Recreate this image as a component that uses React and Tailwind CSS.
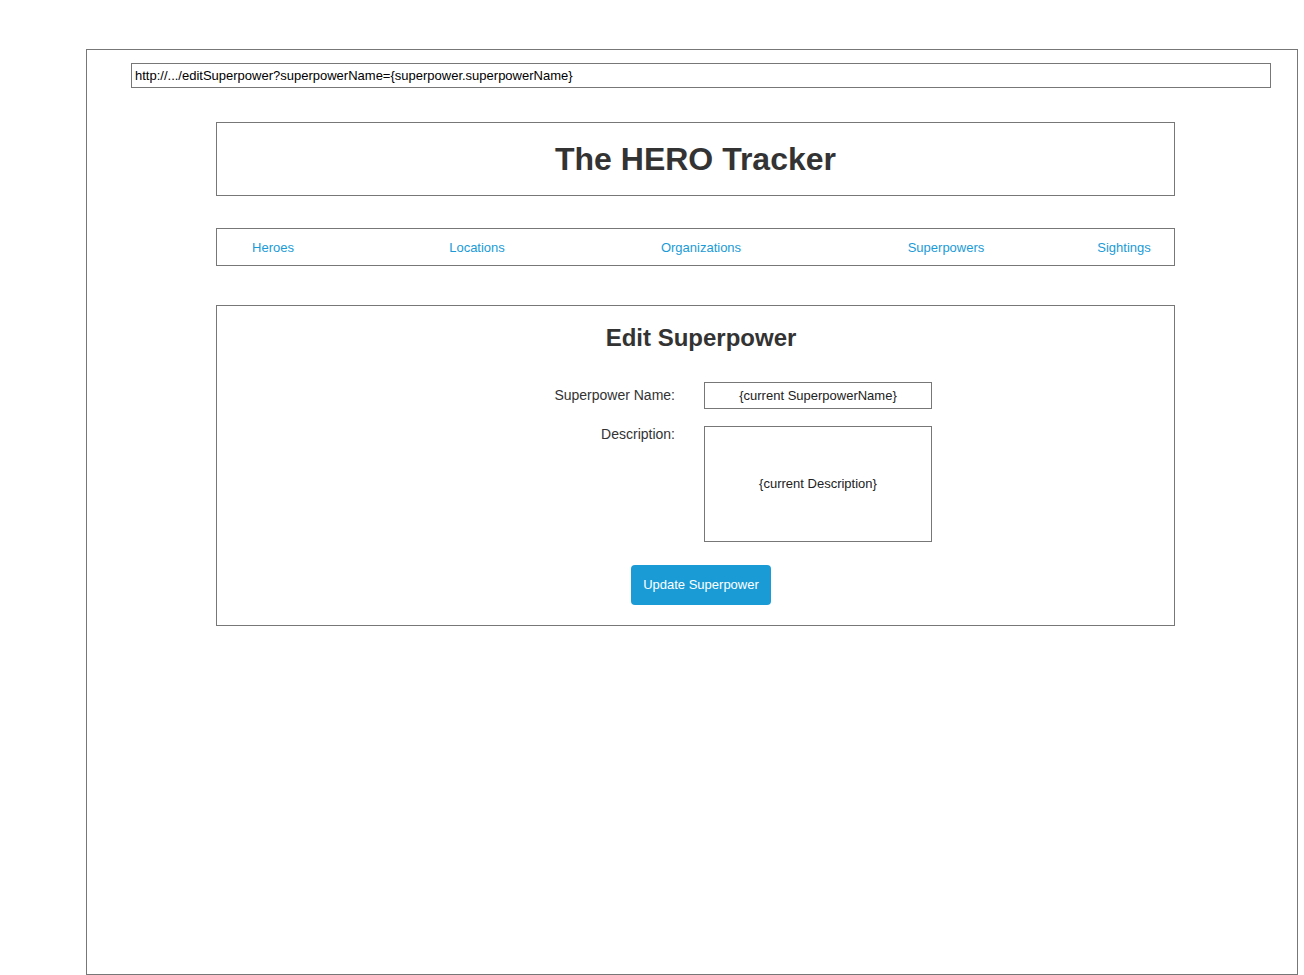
const NAV_LINKS = [
    { label: 'Heroes', w: 'w-[112px]' },
    { label: 'Locations', w: 'w-[296px]' },
    { label: 'Organizations', w: 'w-[152px]' },
    { label: 'Superpowers', w: 'w-[338px]' },
    { label: 'Sightings', w: 'w-[18px]' },
]

export default function App() {
    return (
        <div className="min-h-[975px] bg-white pt-[49px] pl-[86px] font-['Liberation_Sans',Arial,sans-serif]">
            {/* Browser frame */}
            <div className="w-[1212px] h-[926px] border border-[#777] flex flex-col">

                {/* URL bar */}
                <div className="ml-[44px] mt-[13px] w-[1140px] h-[25px] border border-[#777] flex items-center pl-[3px] pt-[1px] text-[13px] text-black">
                    http://.../editSuperpower?superpowerName={'{'}superpower.superpowerName{'}'}
                </div>

                {/* Header */}
                <div className="ml-[129px] mt-[34px] w-[959px] h-[74px] border border-[#777] flex items-center justify-center">
                    <h1 className="text-[32px] font-bold text-[#333] leading-none">The HERO Tracker</h1>
                </div>

                {/* Nav */}
                <nav className="ml-[129px] mt-[32px] w-[959px] h-[38px] border border-[#777] flex items-center pt-[1px]">
                    {NAV_LINKS.map((link) => (
                        <a
                            key={link.label}
                            href="#"
                            className={`${link.w} flex justify-center whitespace-nowrap text-[13px] text-[#1a9bd7]`}
                        >
                            {link.label}
                        </a>
                    ))}
                </nav>

                {/* Edit form */}
                <div className="ml-[129px] mt-[39px] w-[959px] h-[321px] border border-[#777] flex flex-col">
                    <h2 className="mt-[18px] pl-[11px] text-center text-[24px] leading-[28px] font-bold text-[#333]">
                        Edit Superpower
                    </h2>

                    <div className="mt-[30px] flex items-center">
                        <label className="w-[458px] text-right text-[14px] text-[#333]">Superpower Name:</label>
                        <div className="ml-[29px] w-[228px] h-[27px] border border-[#777] flex items-center justify-center text-[13px] text-[#222]">
                            {'{'}current SuperpowerName{'}'}
                        </div>
                    </div>

                    <div className="mt-[17px] flex items-start">
                        <label className="w-[458px] text-right text-[14px] leading-[16px] text-[#333]">Description:</label>
                        <div className="ml-[29px] w-[228px] h-[116px] border border-[#777] flex items-center justify-center text-[13px] text-[#222]">
                            {'{'}current Description{'}'}
                        </div>
                    </div>

                    <button className="mt-[23px] ml-[414px] w-[140px] h-[40px] rounded-[4px] bg-[#1a9bd6] text-white text-[13px]">
                        Update Superpower
                    </button>
                </div>
            </div>
        </div>
    )
}
